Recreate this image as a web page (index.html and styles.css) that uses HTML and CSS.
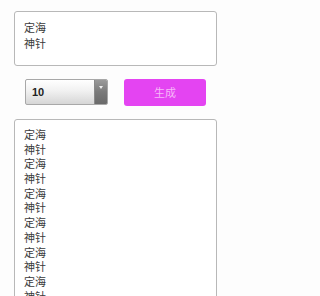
FILE: index.html
```html
<!DOCTYPE html>
<html lang="zh">
<head>
<meta charset="utf-8">
<link rel="stylesheet" href="styles.css">
</head>
<body>
<div class="page">
  <div class="box box-input">
    <div class="line">定海</div>
    <div class="line">神针</div>
  </div>
  <div class="controls">
    <div class="select">
      <span class="select-value">10</span>
      <span class="select-arrow"><span class="dot"></span></span>
    </div>
    <div class="btn">生成</div>
  </div>
  <div class="box box-output">
    <div class="line">定海</div>
    <div class="line">神针</div>
    <div class="line">定海</div>
    <div class="line">神针</div>
    <div class="line">定海</div>
    <div class="line">神针</div>
    <div class="line">定海</div>
    <div class="line">神针</div>
    <div class="line">定海</div>
    <div class="line">神针</div>
    <div class="line">定海</div>
    <div class="line">神针</div>
  </div>
</div>
</body>
</html>
```
FILE: styles.css
```css
html, body {
  margin: 0;
  padding: 0;
  background: #fdfdfd;
  height: 100%;
  overflow: hidden;
}
.page {
  padding: 11px 4px 0 14px;
  font-family: "Noto Sans CJK SC", "Noto Sans", sans-serif;
  font-size: 11px;
  color: #3a3a3a;
}
.box {
  box-sizing: border-box;
  width: 203px;
  background: #fff;
  border: 1px solid #b8b8b8;
  border-radius: 3px;
  padding: 7px 9px;
  overflow: hidden;
}
.line {
  line-height: 14.7px;
  height: 14.7px;
}
.box-input {
  height: 55px;
  padding-top: 8px;
}
.box-input .line {
  line-height: 15.5px;
  height: 15.5px;
}
.box-output {
  margin-top: 13px;
  height: 200px;
  padding-top: 7px;
}
.controls {
  display: flex;
  align-items: center;
  margin-top: 12px;
  padding-left: 11px;
  gap: 16px;
  height: 28px;
}
.select {
  box-sizing: border-box;
  width: 83px;
  height: 26px;
  display: flex;
  border: 1px solid #a8a8a8;
  border-radius: 2px;
  background: linear-gradient(#ffffff, #f1f1f1 45%, #d6d6d6);
  overflow: hidden;
}
.select-value {
  flex: 1;
  display: flex;
  align-items: center;
  padding-left: 6px;
  font-family: "Liberation Sans", Arial, sans-serif;
  font-weight: bold;
  font-size: 11px;
  color: #222;
}
.select-arrow {
  width: 12px;
  display: flex;
  justify-content: center;
  padding-top: 6px;
  background: linear-gradient(#9a9a9a, #7a7a7a 50%, #6a6a6a);
  border-left: 1px solid #8a8a8a;
}
.dot {
  width: 0;
  height: 0;
  border-left: 2px solid transparent;
  border-right: 2px solid transparent;
  border-top: 3px solid #eee;
}
.btn {
  box-sizing: border-box;
  width: 82px;
  height: 27px;
  border-radius: 3px;
  background: #e444f2;
  color: #f6b8f8;
  font-size: 11px;
  display: flex;
  align-items: center;
  justify-content: center;
}
```
